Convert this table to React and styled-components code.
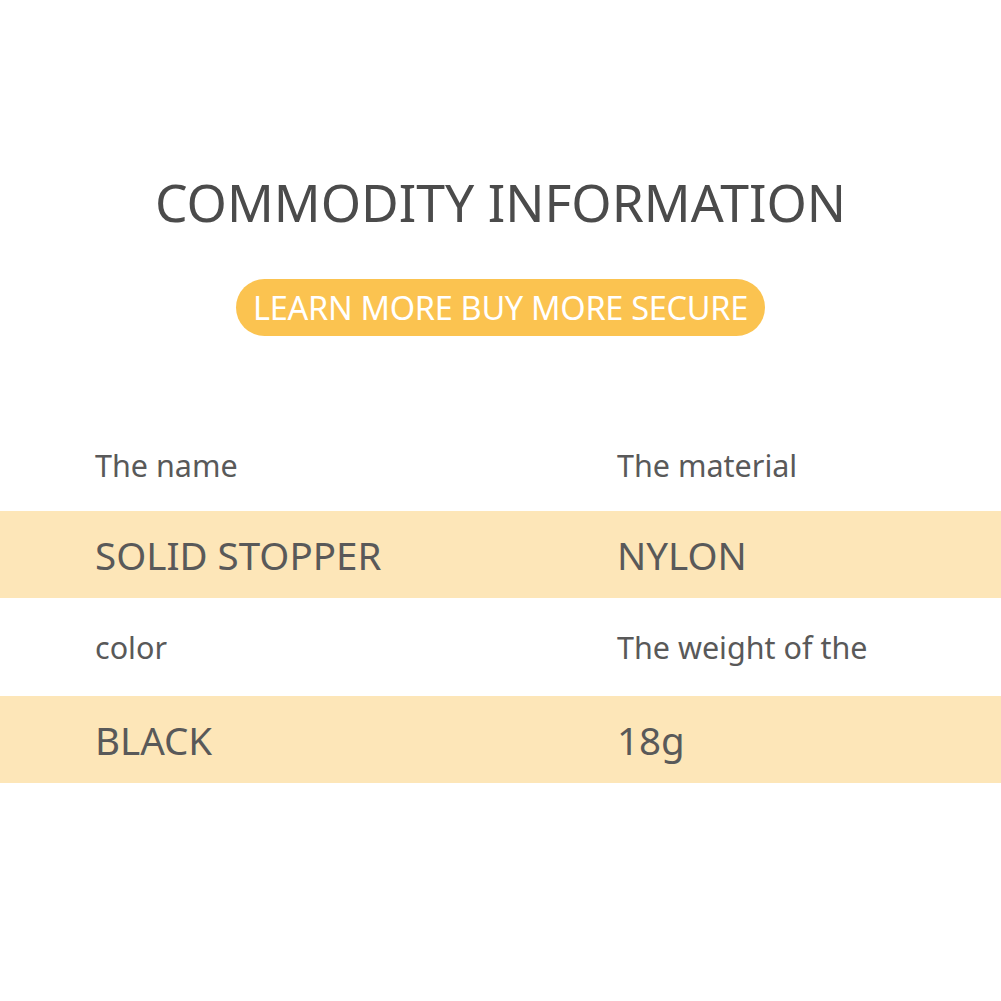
import React from "react";
import styled, { createGlobalStyle } from "styled-components";

const Global = createGlobalStyle`
  html, body { margin: 0; padding: 0; background: #fff; }
  body { font-family: "Noto Sans", "Open Sans", sans-serif; }
`;

const Page = styled.div`
  width: 1001px;
  height: 1001px;
  background: #fff;
  display: flex;
  flex-direction: column;
  align-items: center;
  padding-top: 166px;
  box-sizing: border-box;
`;

const Title = styled.h1`
  margin: 0;
  font-family: "Noto Sans", sans-serif;
  font-weight: 400;
  font-size: 51.7px;
  line-height: 72px;
  color: #4b4b4b;
`;

const Pill = styled.div`
  margin-top: 41px;
  height: 57px;
  width: 529px;
  border-radius: 29px;
  background: #fbc350;
  color: #fff;
  font-family: "Noto Sans", sans-serif;
  font-size: 32.5px;
  display: flex;
  align-items: center;
  justify-content: center;
  box-sizing: border-box;
  letter-spacing: -0.3px;
`;

const Table = styled.div`
  margin-top: 82px;
  width: 100%;
  display: flex;
  flex-direction: column;
`;

const Row = styled.div`
  display: grid;
  grid-template-columns: 522px 1fr;
  padding-left: 95px;
  align-items: center;
  height: ${(p) => p.$h}px;
  background: ${(p) => (p.$band ? "#fde6b8" : "transparent")};
  color: #595959;
  font-family: "Noto Sans", sans-serif;
  font-size: ${(p) => (p.$band ? "38.5px" : "30.5px")};
`;

const Cell = styled.span`
  white-space: nowrap;
`;

export default function App() {
  return (
    <>
      <Global />
      <Page>
        <Title>COMMODITY INFORMATION</Title>
        <Pill>LEARN MORE BUY MORE SECURE</Pill>
        <Table>
          <Row $h={93}>
            <Cell>The name</Cell>
            <Cell>The material</Cell>
          </Row>
          <Row $band $h={87}>
            <Cell>SOLID STOPPER</Cell>
            <Cell>NYLON</Cell>
          </Row>
          <Row $h={98}>
            <Cell>color</Cell>
            <Cell>The weight of the</Cell>
          </Row>
          <Row $band $h={87}>
            <Cell>BLACK</Cell>
            <Cell>18g</Cell>
          </Row>
        </Table>
      </Page>
    </>
  );
}
